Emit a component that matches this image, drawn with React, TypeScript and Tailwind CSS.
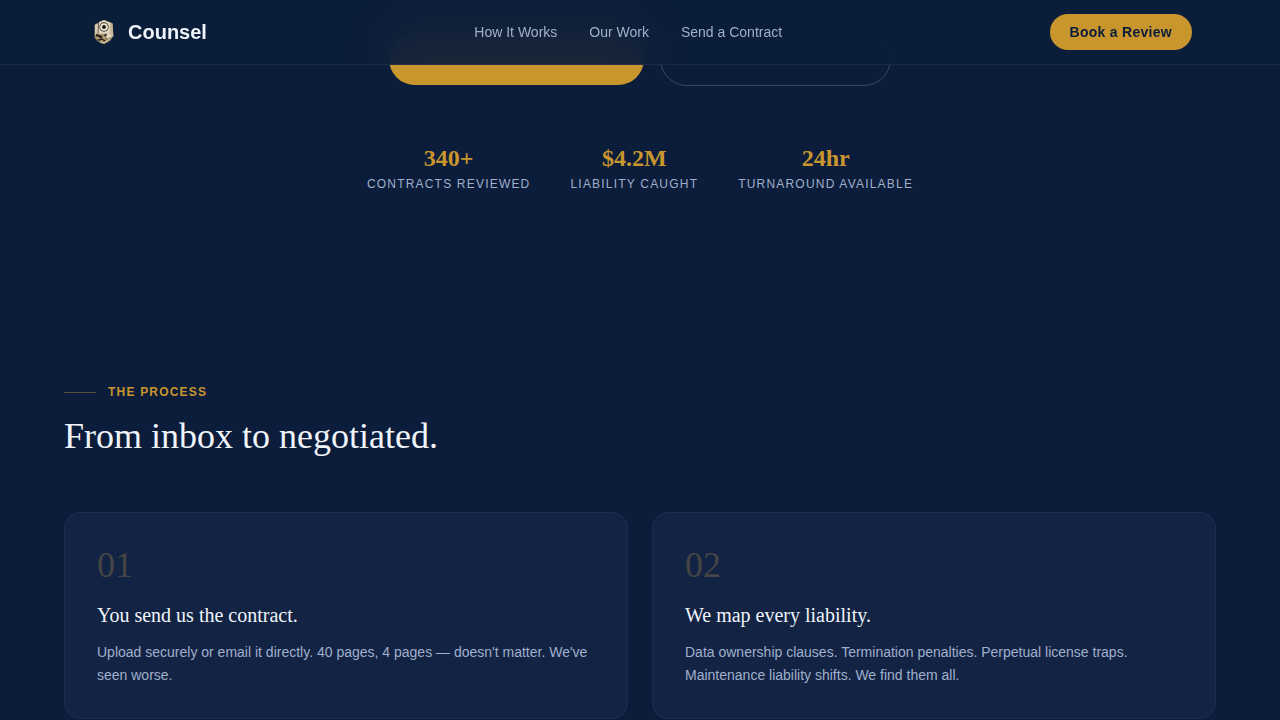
const navLinks = [
  { label: "How It Works", href: "#process" },
  { label: "Our Work", href: "#work" },
  { label: "Send a Contract", href: "#contact" },
];

const stats = [
  { value: "340+", label: "Contracts reviewed" },
  { value: "$4.2M", label: "Liability caught" },
  { value: "24hr", label: "Turnaround available" },
];

const steps = [
  {
    number: "01",
    title: "You send us the contract.",
    body: "Upload securely or email it directly. 40 pages, 4 pages — doesn't matter. We've seen worse.",
  },
  {
    number: "02",
    title: "We map every liability.",
    body: "Data ownership clauses. Termination penalties. Perpetual license traps. Maintenance liability shifts. We find them all.",
  },
];

function Logo() {
  return (
    <svg viewBox="0 0 32 32" className="h-8 w-8" aria-hidden="true">
      <path d="M16 4 24.5 7 25.5 20 22 25 16 28 10 25.5 6.5 22 6.5 8.5Z" fill="#8d8066" />
      <path d="M11 6 16 4 23 7 23.5 19 20 22 15 18 10 18Z" fill="#ddd2b8" />
      <path d="M7 9 10.5 7 10 18.5 7 20Z" fill="#d6cbb0" />
      <path d="M10.5 7 10 18" stroke="#71664f" strokeWidth="1" />
      <path d="M22 8 24.5 7.5 25.3 20 22 23Z" fill="#c4b79a" />
      <circle cx="16" cy="11" r="4.7" fill="#4b4538" />
      <circle cx="16" cy="11" r="3.8" fill="#efe6cf" />
      <circle cx="16" cy="11" r="1.9" fill="#11151d" />
      <path d="M7 19 10 17.5 15 20 18 22 15 25 9 23Z" fill="#b99b62" />
      <path d="M8 19 11 20 14 21.5" stroke="#171a20" strokeWidth="2" fill="none" />
      <path d="M10 24 14 23 17 25" stroke="#26231f" strokeWidth="1.3" fill="none" />
      <path d="M12 26 16 27 22 23" stroke="#d9c493" strokeWidth="1.5" fill="none" />
      <circle cx="17.5" cy="19" r="1.3" fill="#3a352b" />
      <path d="M19 22 23 19" stroke="#efe3c4" strokeWidth="1.6" />
    </svg>
  );
}

function Header() {
  return (
    <header className="fixed inset-x-0 top-0 z-10 border-b border-white/6 bg-[#0b1d3a]/92 backdrop-blur-xl">
      <div className="mx-auto flex h-16 max-w-6xl items-center justify-between px-6">
        <a href="#top" className="flex items-center gap-2">
          <Logo />
          <span className="text-xl font-bold text-[#f0f4fa]">Counsel</span>
        </a>
        <nav className="flex items-center gap-8">
          {navLinks.map((link) => (
            <a key={link.href} href={link.href} className="text-sm text-[#a0b0cc]">
              {link.label}
            </a>
          ))}
        </nav>
        <a
          href="#book"
          className="rounded-full bg-[#c9962e] px-5 py-2 text-sm font-bold tracking-[0.02em] text-[#0b1d3a]"
        >
          Book a Review
        </a>
      </div>
    </header>
  );
}

function Hero() {
  return (
    <section id="top" className="px-6 pt-8">
      <div className="flex items-center justify-center gap-4">
        <a
          href="#book"
          aria-label="Book a Review"
          className="h-[52px] w-[255px] rounded-full bg-[#c9962e]"
        />
        <a
          href="#process"
          aria-label="How It Works"
          className="h-[54px] w-[231px] rounded-full border border-[#3a4866]"
        />
      </div>
      <dl className="mt-14 flex justify-center gap-10 text-center">
        {stats.map((stat) => (
          <div key={stat.label} className="flex flex-col-reverse gap-0.5">
            <dt className="text-xs tracking-widest text-[#a0b0cc] uppercase">{stat.label}</dt>
            <dd className="font-['Liberation_Serif',serif] text-2xl font-bold text-[#c9962e]">
              {stat.value}
            </dd>
          </div>
        ))}
      </dl>
    </section>
  );
}

function Process() {
  return (
    <section id="process" className="px-6 pt-48">
      <div className="mx-auto max-w-6xl">
        <div className="flex items-center gap-3">
          <span className="h-px w-8 bg-[#c9962e]/40" />
          <span className="text-xs font-bold tracking-widest text-[#c9962e] uppercase">
            The Process
          </span>
        </div>
        <h2 className="mt-4 font-['Liberation_Serif',serif] text-4xl text-[#f0f4fa]">
          From inbox to negotiated.
        </h2>
        <div className="mt-14 grid grid-cols-2 gap-6">
          {steps.map((step) => (
            <article
              key={step.number}
              className="rounded-2xl border border-[#1e2e51] bg-[#122344] px-8 pt-8 pb-[31px]"
            >
              <div className="font-['Liberation_Serif',serif] text-4xl text-[#454545]">
                {step.number}
              </div>
              <h3 className="mt-4 font-['Liberation_Serif',serif] text-xl text-[#f0f4fa]">
                {step.title}
              </h3>
              <p className="mt-3 text-sm leading-[23px] text-[#a0b0cc]">{step.body}</p>
            </article>
          ))}
        </div>
      </div>
    </section>
  );
}

export default function App() {
  return (
    <div className="min-h-screen bg-[#0b1d3a] font-['Liberation_Sans',sans-serif]">
      <Header />
      <main>
        <Hero />
        <Process />
      </main>
    </div>
  );
}
